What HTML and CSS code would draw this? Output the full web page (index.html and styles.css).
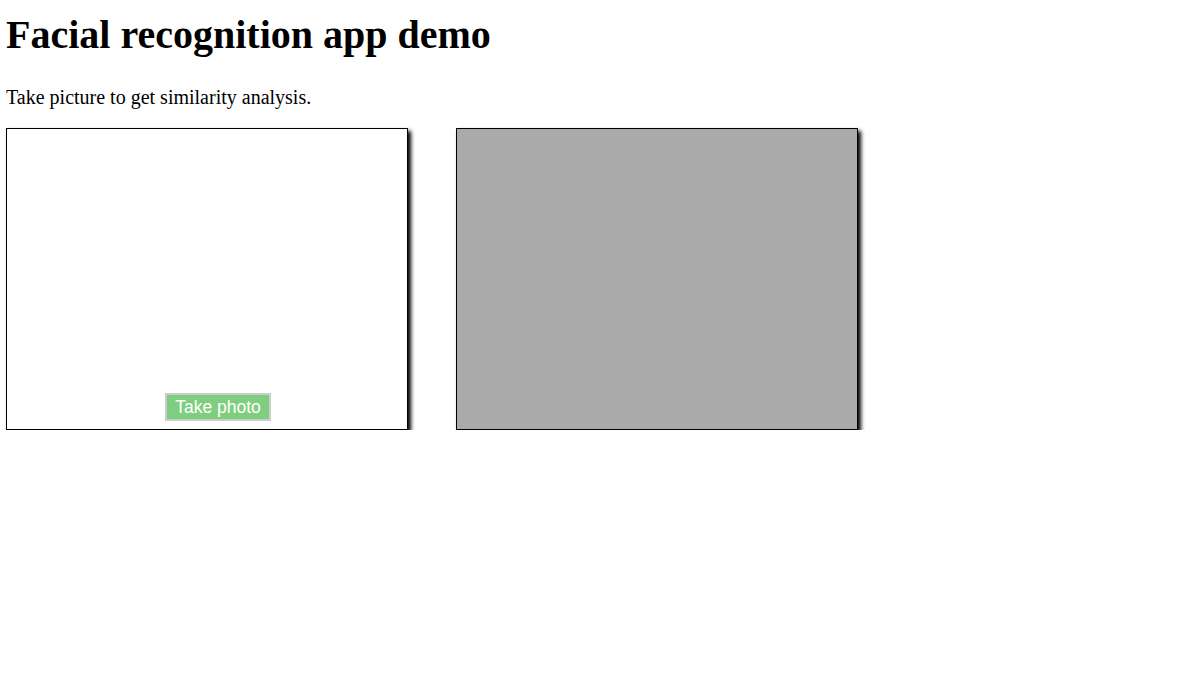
FILE: index.html
```html
<!DOCTYPE html>
<html>
<head>
<meta charset="utf-8">
<link rel="stylesheet" href="styles.css">
</head>
<body class="page">
<h1 class="title">Facial recognition app demo</h1>
<p class="lead">Take picture to get similarity analysis.</p>
<div class="row">
  <div class="frame camera">
    <button class="shoot">Take photo</button>
  </div>
  <div class="frame result"></div>
</div>
</body>
</html>
```
FILE: styles.css
```css
.page {
  margin: 0;
  padding: 11px 6px 0;
  font-family: "Liberation Serif", "Times New Roman", serif;
  color: #000;
  background: #fff;
}
.title {
  font-size: 40px;
  font-weight: bold;
  line-height: normal;
  margin: 0 0 28px;
}
.lead {
  font-size: 20px;
  line-height: normal;
  margin: 0 0 19px;
}
.row {
  display: flex;
  gap: 48px;
}
.frame {
  position: relative;
  width: 400px;
  height: 300px;
  border: 1px solid #000;
  box-shadow: 3px 3px 4px #000;
}
.camera { background: #fff; }
.result { background: #aaa; }
.shoot {
  position: absolute;
  left: 158px;
  bottom: 8px;
  width: 106px;
  height: 28px;
  padding: 1px 0 0;
  border: 2px solid #ccc;
  background: #7fce7f;
  color: #fff;
  font-family: "Liberation Sans", Arial, sans-serif;
  font-size: 17.5px;
  line-height: 1;
}
```
